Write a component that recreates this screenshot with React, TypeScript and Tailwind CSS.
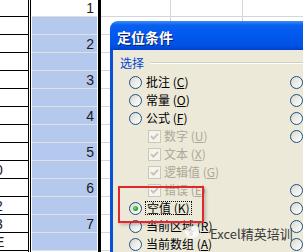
import React from "react";

type Opt = {
  kind: "radio" | "check";
  label: string;
  hot: string;
  right: boolean;
  selected?: boolean;
};

const opts: Opt[] = [
  { kind: "radio", label: "批注", hot: "C", right: true },
  { kind: "radio", label: "常量", hot: "O", right: true },
  { kind: "radio", label: "公式", hot: "F", right: true },
  { kind: "check", label: "数字", hot: "U", right: true },
  { kind: "check", label: "文本", hot: "X", right: false },
  { kind: "check", label: "逻辑值", hot: "G", right: false },
  { kind: "check", label: "错误", hot: "E", right: true },
  { kind: "radio", label: "空值", hot: "K", right: true, selected: true },
  { kind: "radio", label: "当前区域", hot: "R", right: true },
  { kind: "radio", label: "当前数组", hot: "A", right: true },
];

// 14 sheet rows: first one is 17px tall, the rest 18px
const sheetRows = Array.from({ length: 14 }, (_, i) => i);
const colNums: Record<number, string> = { 0: "1", 2: "2", 4: "3", 6: "4", 8: "5", 10: "6", 12: "7" };
const leftCut: Record<number, string> = { 9: "0", 10: ".", 11: "2", 12: "3", 13: "E" };

function Radio({ on }: { on?: boolean }) {
  return (
    <span className="relative flex h-[13px] w-[13px] shrink-0 items-center justify-center rounded-full border border-[#1c5180] bg-[linear-gradient(135deg,#d6d5ce_0%,#ecebe6_45%,#ffffff_100%)]">
      {on ? (
        <span className="h-[5px] w-[5px] rounded-full bg-[radial-gradient(circle_at_40%_40%,#7ee07e_0%,#21a121_60%,#1a8a1a_100%)]" />
      ) : null}
    </span>
  );
}

function Check() {
  return (
    <span className="flex h-[13px] w-[13px] shrink-0 items-center justify-center border border-[#cac8bb] bg-[#f4f3ee]">
      <svg width="9" height="9" viewBox="0 0 9 9">
        <path d="M1 4.2 L3.4 6.6 L8 1.8" fill="none" stroke="#c4c2b4" strokeWidth="1.8" />
      </svg>
    </span>
  );
}

function Label({ o }: { o: Opt }) {
  const txt = (
    <>
      {o.label} (<span className="underline">{o.hot}</span>)
    </>
  );
  if (o.selected) {
    return (
      <span className="ml-[3px] border border-dotted border-black px-[1px] leading-[12px] text-black">
        {txt}
      </span>
    );
  }
  return (
    <span className={o.kind === "check" ? "ml-[3px] text-[#aca899]" : "ml-[4px] text-black"}>{txt}</span>
  );
}

function Dialog() {
  return (
    <div className="absolute left-[110px] top-[21px] h-[240px] w-[200px] overflow-hidden rounded-tl-[8px] font-['Noto_Sans_CJK_SC',sans-serif]">
      {/* Title bar */}
      <div className="flex h-[29px] items-center bg-[linear-gradient(to_bottom,#3d8ef6_0%,#0a60f0_14%,#0058ee_50%,#0053e4_84%,#003fcf_100%)] pl-[7px] pt-[2px]">
        <span className="text-[14px] font-bold leading-none text-white [text-shadow:1px_1px_0_#0a1e6e]">定位条件</span>
      </div>

      {/* Body */}
      <div className="h-full border-l-[3px] border-[#0b4ed9] bg-[#ece9d8] text-[12px] leading-[14px]">
        <div className="flex h-[15px] items-center pl-[7px] pt-[5px] box-content">
          <span className="text-[#0046d5]">选择</span>
          <div className="ml-[6px] h-[2px] flex-1 border-t border-b border-t-[#d0d0bf] border-b-white" />
        </div>

        <div className="mt-[3px] flex flex-col">
          {opts.map((o) => (
            <div key={o.label} className="flex h-[18px] items-center">
              <div className="flex w-[177px] items-center">
                {o.kind === "radio" ? (
                  <span className="ml-[16px] flex items-center">
                    <Radio on={o.selected} />
                  </span>
                ) : (
                  <span className="ml-[35px] flex items-center">
                    <Check />
                  </span>
                )}
                <Label o={o} />
              </div>
              {o.right ? <Radio /> : null}
            </div>
          ))}
        </div>
      </div>
    </div>
  );
}

export default function App() {
  return (
    <div className="relative h-[252px] w-[303px] overflow-hidden bg-white font-['Liberation_Sans',sans-serif]">
      <div className="flex h-full">
        {/* Column A (cut off) */}
        <div className="flex w-[29px] flex-col overflow-hidden">
          {sheetRows.map((i) => (
            <div
              key={i}
              className={`flex shrink-0 items-end border-b border-black text-[14px] leading-[16px] text-[#202020] ${i === 0 ? "h-[17px]" : "h-[18px]"}`}
            >
              {leftCut[i] ? <span className="ml-[-5px]">{leftCut[i]}</span> : null}
            </div>
          ))}
        </div>

        {/* double border */}
        <div className="w-[1px] bg-black" />
        <div className="w-[1px] bg-white" />
        <div className="w-[1px] bg-black" />
        <div className="w-[1px] bg-white" />

        {/* Column B, selected */}
        <div className="flex w-[68px] flex-col">
          {sheetRows.map((i) => (
            <div
              key={i}
              className={`flex shrink-0 items-end justify-end pr-[3px] text-[14px] leading-[15px] text-[#1a1a1a] ${
                i === 0 ? "h-[17px] border-b border-[#dcdfe2] bg-white" : "h-[18px] border-b border-[#dde1e3] bg-[#b5c8ee]"
              }`}
            >
              {colNums[i] ?? ""}
            </div>
          ))}
        </div>

        {/* selection edge */}
        <div className="ml-[1px] w-[3px] bg-black" />

        {/* Columns to the right */}
        <div className="flex flex-1">
          {[70, 72, 60].map((w, c) => (
            <div key={c} className={`flex shrink-0 flex-col ${c < 2 ? "border-r border-[#d6d6d6]" : ""}`} style={{ width: w }}>
              {sheetRows.map((i) => (
                <div key={i} className={`shrink-0 border-b border-[#d6d6d6] ${i === 0 ? "h-[17px]" : "h-[18px]"}`} />
              ))}
            </div>
          ))}
        </div>
      </div>

      <Dialog />

      {/* red highlight */}
      <div className="absolute left-[118px] top-[186px] h-[37px] w-[86px] border-2 border-[#e3262b] shadow-[2px_2px_3px_rgba(0,0,0,0.2)]" />

      {/* watermark */}
      <svg className="absolute left-[183px] top-[222px]" width="20" height="18" viewBox="0 0 20 18">
        <ellipse cx="9" cy="10" rx="7" ry="6" fill="#ffffff" opacity="0.75" />
        <ellipse cx="12" cy="7" rx="4" ry="3" fill="#f4f4f4" opacity="0.9" />
        <circle cx="8" cy="12" r="2" fill="#d8d8d8" opacity="0.7" />
      </svg>
      <div className="absolute left-[210px] top-[226px] text-[13px] leading-[15px] text-[#3a3a3a] font-['Noto_Sans_CJK_SC',sans-serif]">
        Excel精英培训
      </div>
    </div>
  );
}
